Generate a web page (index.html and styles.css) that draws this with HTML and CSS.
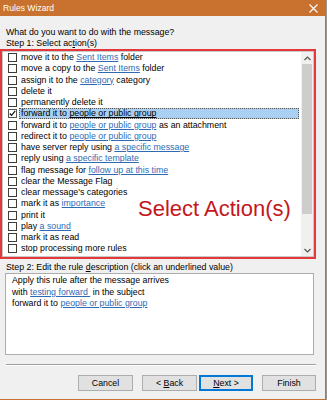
FILE: index.html
```html
<!DOCTYPE html>
<html>
<head>
<meta charset="utf-8">
<link rel="stylesheet" href="styles.css">
</head>
<body>
<div class="window">
  <div class="titlebar">
    <span class="title">Rules Wizard</span>
    <svg class="close" width="9" height="9" viewBox="0 0 9 9"><path d="M0.5 0.5 L8.5 8.5 M8.5 0.5 L0.5 8.5" stroke="#fff" stroke-width="1.1" fill="none"/></svg>
  </div>
  <div class="prompt">What do you want to do with the message?</div>
  <div class="label">Step 1: Select ac<u>t</u>ion(s)</div>
  <div class="redbox">
    <div class="list">
      <div class="rows">
        <div class="row"><span class="cb"></span><span class="txt">move it to the <a>Sent Items</a> folder</span></div>
        <div class="row"><span class="cb"></span><span class="txt">move a copy to the <a>Sent Items</a> folder</span></div>
        <div class="row"><span class="cb"></span><span class="txt">assign it to the <a>category</a> category</span></div>
        <div class="row"><span class="cb"></span><span class="txt">delete it</span></div>
        <div class="row"><span class="cb"></span><span class="txt">permanently delete it</span></div>
        <div class="row"><span class="cb checked"><svg width="9" height="9" viewBox="0 0 9 9"><path d="M1 4.5 L3.3 7 L8 1.2" stroke="#111" stroke-width="1.5" fill="none"/></svg></span><span class="txt selected">forward it to <u>people or public group</u></span></div>
        <div class="row"><span class="cb"></span><span class="txt">forward it to <a>people or public group</a> as an attachment</span></div>
        <div class="row"><span class="cb"></span><span class="txt">redirect it to <a>people or public group</a></span></div>
        <div class="row"><span class="cb"></span><span class="txt">have server reply using <a>a specific message</a></span></div>
        <div class="row"><span class="cb"></span><span class="txt">reply using <a>a specific template</a></span></div>
        <div class="row"><span class="cb"></span><span class="txt">flag message for <a>follow up at this time</a></span></div>
        <div class="row"><span class="cb"></span><span class="txt">clear the Message Flag</span></div>
        <div class="row"><span class="cb"></span><span class="txt">clear message's categories</span></div>
        <div class="row"><span class="cb"></span><span class="txt">mark it as <a>importance</a></span></div>
        <div class="row"><span class="cb"></span><span class="txt">print it</span></div>
        <div class="row"><span class="cb"></span><span class="txt">play <a>a sound</a></span></div>
        <div class="row"><span class="cb"></span><span class="txt">mark it as read</span></div>
        <div class="row"><span class="cb"></span><span class="txt">stop processing more rules</span></div>
      </div>
      <div class="scrollbar">
        <div class="arrow"><svg width="7" height="5" viewBox="0 0 7 5"><path d="M0.5 4 L3.5 1 L6.5 4" stroke="#555" stroke-width="1.2" fill="none"/></svg></div>
        <div class="thumb"></div>
        <div class="track"></div>
        <div class="arrow"><svg width="7" height="5" viewBox="0 0 7 5"><path d="M0.5 1 L3.5 4 L6.5 1" stroke="#555" stroke-width="1.2" fill="none"/></svg></div>
      </div>
    </div>
    <div class="annotation">Select Action(s)</div>
  </div>
  <div class="label step2">Step 2: Edit the rule <u>d</u>escription (click an underlined value)</div>
  <div class="desc">
    <div>Apply this rule after the message arrives</div>
    <div>with <a>testing forward&nbsp;</a> in the subject</div>
    <div>forward it to <a>people or public group</a></div>
  </div>
  <div class="separator"></div>
  <div class="buttons">
    <div class="btn cancel"><span>Cancel</span></div>
    <div class="btn back"><span>&lt; <u>B</u>ack</span></div>
    <div class="btn next"><span><u>N</u>ext &gt;</span></div>
    <div class="btn finish"><span>Finish</span></div>
  </div>
</div>
</body>
</html>
```
FILE: styles.css
```css
body {
  margin: 0;
  background: #9c948a;
  font-family: "Liberation Sans", Arial, sans-serif;
  font-size: 8.8px;
  color: #000;
}
.window {
  width: 326px;
  height: 400px;
  box-sizing: border-box;
  background: #f0f0f0;
  border-right: 1px solid #c9712e;
  border-bottom: 1px solid #c9712e;
  display: flex;
  flex-direction: column;
}
.titlebar {
  height: 16px;
  background: #c9712e;
  color: #fff;
  display: flex;
  align-items: center;
  justify-content: space-between;
  padding: 0 7px 0 3px;
  font-size: 8.6px;
}
.prompt {
  margin-top: 11px;
  padding-left: 6px;
  line-height: 11px;
}
.label {
  padding-left: 6px;
  line-height: 11px;
}
.redbox {
  position: relative;
  width: 316px;
  height: 210px;
  box-sizing: border-box;
  border: 2px solid #e5383b;
}
.list {
  height: 100%;
  box-sizing: border-box;
  background: #fff;
  border: 1px solid #c8c8c8;
  display: flex;
}
.rows {
  flex: 1;
  display: flex;
  flex-direction: column;
}
.row {
  height: 11.25px;
  display: flex;
  align-items: center;
}
.cb {
  width: 9px;
  height: 9px;
  box-sizing: border-box;
  border: 1px solid #3c3c3c;
  background: #fff;
  margin-left: 5px;
  flex: none;
  display: flex;
  align-items: center;
  justify-content: center;
}
.cb.checked {
  border-color: #555;
}
.txt {
  margin-left: 4px;
  white-space: nowrap;
  line-height: 11px;
}
.txt.selected {
  flex: 1;
  margin-left: 2px;
  margin-right: 2px;
  padding-left: 2px;
  background: #a9cff2;
  outline: 1px dotted #555;
  outline-offset: -1px;
}
a {
  color: #2f6ab4;
  text-decoration: underline;
}
.scrollbar {
  width: 12px;
  background: #f0f0f0;
  display: flex;
  flex-direction: column;
}
.arrow {
  height: 12px;
  display: flex;
  align-items: center;
  justify-content: center;
}
.thumb {
  height: 150px;
  background: #cdcdcd;
  margin: 0 1px;
}
.track {
  flex: 1;
}
.annotation {
  position: absolute;
  left: 136px;
  top: 147px;
  font-size: 22px;
  line-height: 22px;
  color: #c4161c;
  white-space: nowrap;
}
.step2 {
  margin-top: 3px;
}
.desc {
  margin-left: 5px;
  width: 309px;
  height: 82px;
  box-sizing: border-box;
  background: #fff;
  border: 1px solid #adadad;
  padding: 1px 6px 0;
  line-height: 11.5px;
}
.separator {
  margin: 9px 0 0 6px;
  width: 310px;
  height: 1px;
  background: #a0a0a0;
  border-bottom: 1px solid #fff;
}
.buttons {
  margin-top: 9px;
  display: flex;
  padding-left: 78px;
}
.btn {
  height: 16px;
  box-sizing: border-box;
  background: #e1e1e1;
  border: 1px solid #adadad;
  display: flex;
  align-items: center;
  justify-content: center;
  width: 55px;
}
.back {
  margin-left: 9px;
}
.next {
  margin-left: 2px;
  width: 54px;
  border-color: #0078d7;
  box-shadow: inset 0 0 0 1px #0078d7;
}
.finish {
  margin-left: 9px;
  width: 54px;
}
```
